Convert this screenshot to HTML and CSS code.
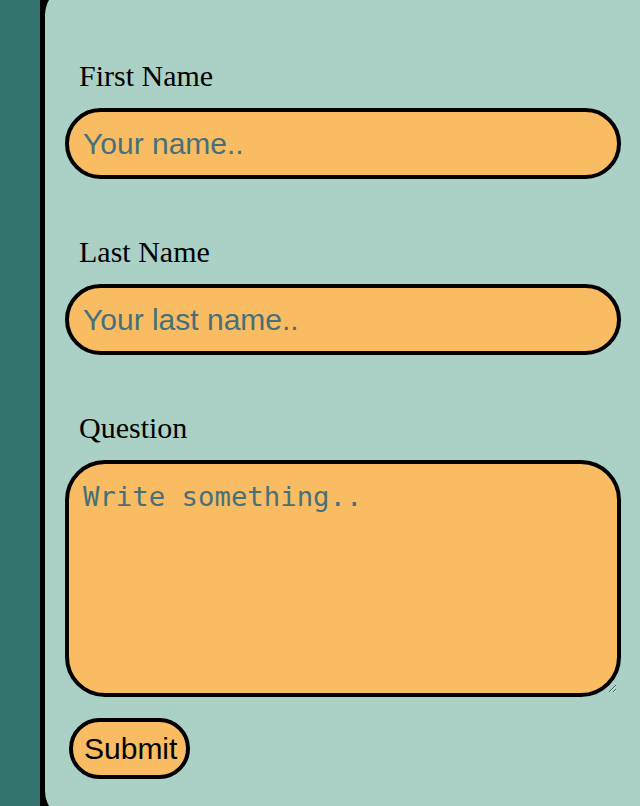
FILE: index.html
```html
<!DOCTYPE html>
<html>
<head>
<meta charset="utf-8">
<link rel="stylesheet" href="styles.css">
</head>
<body>
<div class="page">
  <div class="side"></div>
  <div class="frame">
    <form class="panel">
      <label class="label" for="fname">First Name</label>
      <input class="field" id="fname" type="text" placeholder="Your name..">
      <label class="label" for="lname">Last Name</label>
      <input class="field" id="lname" type="text" placeholder="Your last name..">
      <label class="label" for="q">Question</label>
      <textarea class="area" id="q" placeholder="Write something.."></textarea>
      <div class="actions"><button class="submit" type="button">Submit</button></div>
    </form>
  </div>
</div>
</body>
</html>
```
FILE: styles.css
```css
html, body {
  margin: 0;
  padding: 0;
  height: 100%;
  overflow: hidden;
  background: #367470;
}
.page {
  display: flex;
  height: 806px;
  overflow: hidden;
}
.side {
  width: 40px;
  flex: none;
  background: #367470;
}
.frame {
  flex: 1;
  background: #000;
  padding-left: 5px;
}
.panel {
  display: flex;
  flex-direction: column;
  align-items: stretch;
  background: #abd1c6;
  border-radius: 30px 0 0 30px;
  margin-top: -15px;
  height: 836px;
  box-sizing: border-box;
  padding: 74px 19px 0 20px;
  font-family: "Liberation Serif", "Times New Roman", serif;
}
.label {
  display: block;
  font-size: 30px;
  line-height: 34px;
  color: #000;
  padding-left: 14px;
  margin-bottom: 15px;
}
.field {
  display: block;
  box-sizing: border-box;
  width: 100%;
  height: 71px;
  margin: 0 0 56px 0;
  padding: 0 14px;
  border: 4px solid #000;
  border-radius: 36px;
  background: #f9bc62;
  font-family: "Liberation Sans", Arial, sans-serif;
  font-size: 30px;
  color: #000;
  outline: none;
}
.field::placeholder,
.area::placeholder {
  color: #46707a;
  opacity: 1;
}
.area {
  display: block;
  box-sizing: border-box;
  width: 100%;
  height: 237px;
  margin: 0 0 21px 0;
  padding: 17px 14px;
  border: 4px solid #000;
  border-radius: 40px;
  background: #f9bc62;
  font-family: "DejaVu Sans Mono", "Liberation Mono", monospace;
  font-size: 27.3px;
  line-height: 32px;
  color: #000;
  outline: none;
  resize: vertical;
}
.actions {
  display: flex;
  padding-left: 4px;
}
.submit {
  box-sizing: border-box;
  height: 61px;
  padding: 0 9px 0 11px;
  border: 4px solid #000;
  border-radius: 31px;
  background: #f9bc62;
  font-family: "Liberation Sans", Arial, sans-serif;
  font-size: 30px;
  color: #000;
  cursor: pointer;
}
```
